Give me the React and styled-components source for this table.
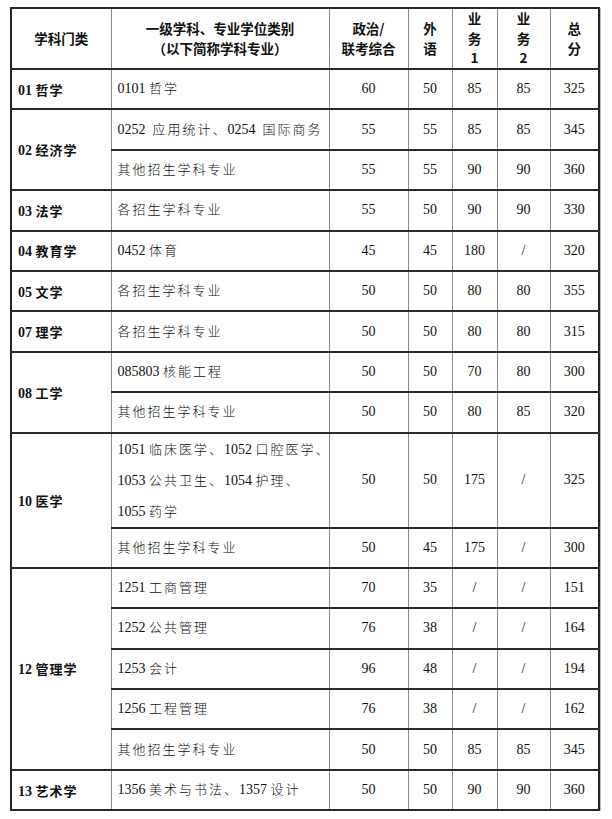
import React from 'react';
import { createGlobalStyle, styled } from 'styled-components';

const Global = createGlobalStyle`
  body {
    margin: 0;
    background: #fff;
    font-family: "Liberation Serif", "Noto Sans CJK SC", serif;
    color: #111;
  }
`;

const Page = styled.div`
  padding: 7px 11px 0 10px;
`;

const Table = styled.table`
  border-collapse: collapse;
  table-layout: fixed;
  width: 588px;
  border: 2px solid #222;
  box-shadow: 1px 1px 0 #bbb;
`;

const Row = styled.tr`
  height: ${(p) => p.$h || 40}px;
`;

const Cell = styled.td`
  border-top: 2px solid #2a2a2a;
  border-bottom: 2px solid #2a2a2a;
  border-left: 1px solid #8a8a8a;
  border-right: 1px solid #8a8a8a;
  padding: 0;
  font-size: 14px;
  vertical-align: middle;
`;

const HeadCell = styled(Cell)`
  font-family: "Noto Sans CJK SC", sans-serif;
  font-weight: 700;
  font-size: 13.5px;
  line-height: 19.6px;
  text-align: center;
  color: #111;
`;

const CategoryCell = styled(Cell)`
  padding-left: 6px;
  font-weight: 700;
  font-family: "Liberation Serif", "Noto Sans CJK SC", serif;
`;

const MajorCell = styled(Cell)`
  padding-left: 6px;
  white-space: pre;
  font-size: 14px;
  line-height: ${(p) => p.$lh || 16}px;
  font-family: "Liberation Serif", "Noto Sans CJK SC", serif;
  font-weight: 300;
`;

const Zh = styled.span`
  font-size: 13px;
  letter-spacing: ${(p) => p.$ls || 2}px;
`;

const ScoreCell = styled(Cell)`
  text-align: center;
`;

const groups = [
  { cat: '01 哲学', rows: [['0101 哲学', 60, 50, 85, 85, 325]] },
  {
    cat: '02 经济学',
    rows: [
      ['0252  应用统计、0254  国际商务', 55, 55, 85, 85, 345],
      ['其他招生学科专业', 55, 55, 90, 90, 360],
    ],
  },
  { cat: '03 法学', rows: [['各招生学科专业', 55, 50, 90, 90, 330]] },
  { cat: '04 教育学', rows: [['0452 体育', 45, 45, 180, '/', 320]] },
  { cat: '05 文学', rows: [['各招生学科专业', 50, 50, 80, 80, 355]] },
  { cat: '07 理学', rows: [['各招生学科专业', 50, 50, 80, 80, 315]] },
  {
    cat: '08 工学',
    rows: [
      ['085803 核能工程', 50, 50, 70, 80, 300],
      ['其他招生学科专业', 50, 50, 80, 85, 320],
    ],
  },
  {
    cat: '10 医学',
    rows: [
      [
        ['1051 临床医学、1052 口腔医学、', '1053 公共卫生、1054 护理、', '1055 药学'],
        50, 50, 175, '/', 325,
      ],
      ['其他招生学科专业', 50, 45, 175, '/', 300],
    ],
  },
  {
    cat: '12 管理学',
    rows: [
      ['1251 工商管理', 70, 35, '/', '/', 151],
      ['1252 公共管理', 76, 38, '/', '/', 164],
      ['1253 会计', 96, 48, '/', '/', 194],
      ['1256 工程管理', 76, 38, '/', '/', 162],
      ['其他招生学科专业', 50, 50, 85, 85, 345],
    ],
  },
  { cat: '13 艺术学', rows: [['1356 美术与书法、1357 设计', 50, 50, 90, 90, 360]] },
];

const widths = [100, 218, 79, 44, 45, 53, 49];

// spread the Chinese characters apart but keep digits at their natural width
function Spaced({ text, ls }) {
  return text.split(/([\u3000-\u303f\u4e00-\u9fff]+)/).map((part, i) =>
    /[\u3000-\u303f\u4e00-\u9fff]/.test(part) ? (
      <Zh key={i} $ls={ls}>
        {part}
      </Zh>
    ) : (
      part
    )
  );
}

export default function App() {
  return (
    <Page>
      <Global />
      <Table>
        <colgroup>
          {widths.map((w, i) => (
            <col key={i} style={{ width: w }} />
          ))}
        </colgroup>
        <tbody>
          <Row $h={61}>
            <HeadCell>学科门类</HeadCell>
            <HeadCell>
              一级学科、专业学位类别
              <br />
              （以下简称学科专业）
            </HeadCell>
            <HeadCell>
              政治/
              <br />
              联考综合
            </HeadCell>
            <HeadCell>
              外<br />语
            </HeadCell>
            <HeadCell>
              业<br />务<br />1
            </HeadCell>
            <HeadCell>
              业<br />务<br />2
            </HeadCell>
            <HeadCell>
              总<br />分
            </HeadCell>
          </Row>
          {groups.map((g) =>
            g.rows.map((r, i) => {
              const multi = Array.isArray(r[0]);
              return (
                <Row key={g.cat + i} $h={multi ? 95 : 40.4}>
                  {i === 0 && (
                    <CategoryCell rowSpan={g.rows.length}>
                      <Spaced text={g.cat} ls={1} />
                    </CategoryCell>
                  )}
                  <MajorCell $lh={multi ? 31 : 16}>
                    {multi
                      ? r[0].map((l, k) => (
                          <React.Fragment key={k}>
                            <Spaced text={l} />
                            {k < r[0].length - 1 && <br />}
                          </React.Fragment>
                        ))
                      : <Spaced text={r[0]} />}
                  </MajorCell>
                  {r.slice(1).map((v, k) => (
                    <ScoreCell key={k}>{v}</ScoreCell>
                  ))}
                </Row>
              );
            })
          )}
        </tbody>
      </Table>
    </Page>
  );
}
